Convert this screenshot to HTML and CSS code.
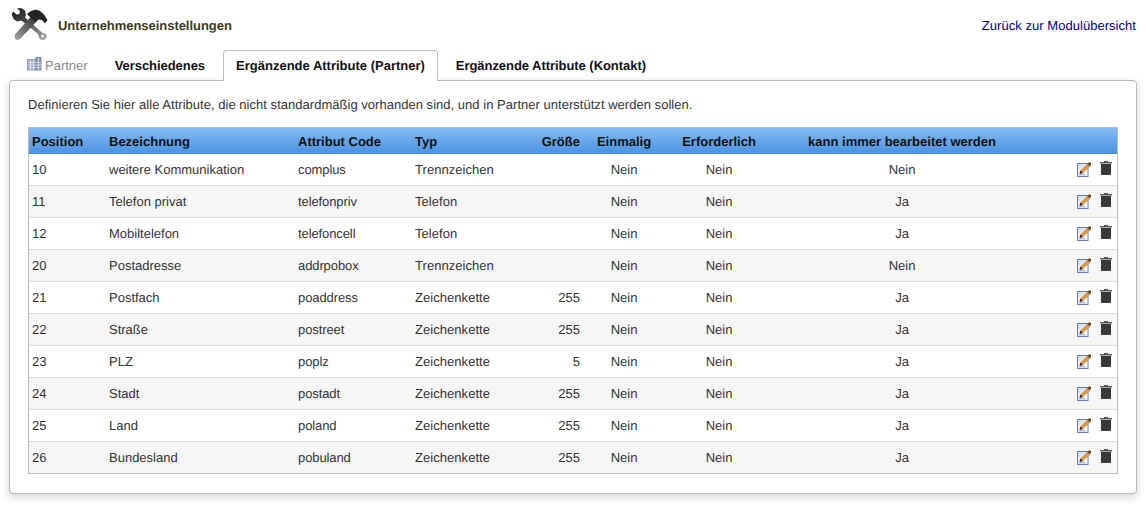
FILE: index.html
```html
<!DOCTYPE html>
<html lang="de">
<head>
<meta charset="utf-8">
<title>Unternehmenseinstellungen</title>
<link rel="stylesheet" href="styles.css">
</head>
<body>
<svg class="defs" width="0" height="0" aria-hidden="true">
  <defs>
    <linearGradient id="metal" x1="0" y1="0" x2="1" y2="1">
      <stop offset="0" stop-color="#1c1c1c"/><stop offset="0.45" stop-color="#4a4a4a"/><stop offset="1" stop-color="#b0b0b0"/>
    </linearGradient>
    <linearGradient id="metal2" x1="1" y1="0" x2="0" y2="1">
      <stop offset="0" stop-color="#333"/><stop offset="0.5" stop-color="#666"/><stop offset="1" stop-color="#a8a8a8"/>
    </linearGradient>
    <linearGradient id="sheet" x1="0" y1="0" x2="1" y2="1">
      <stop offset="0" stop-color="#cfdcf2"/><stop offset="1" stop-color="#ffffff"/>
    </linearGradient>
    <symbol id="edit" viewBox="0 0 14 15">
      <rect x="0.500" y="1.500" width="10.500" height="13" fill="url(#sheet)" stroke="#5f80bd"/>
      <path d="M2.500 12 3.500 8.500 10 2 13 4.500 6 11Z" fill="#e0953f"/>
      <path d="M10 2 11.500 0.500 14 0.500 14 3 13 4.500Z" fill="#6e4c24"/>
      <path d="M2.500 12 3.500 8.500 6 11Z" fill="#2c2c2c"/>
      <path d="M2.500 12.800H8.500" stroke="#8ea4cf" fill="none"/>
    </symbol>
    <symbol id="trash" viewBox="0 0 12 14">
      <path d="M4 0H8V1H12V2.500H0V1H4Z" fill="#555"/>
      <path d="M1 3H11V13Q11 14 10 14H2Q1 14 1 13Z" fill="#383838"/>
    </symbol>
  </defs>
</svg>
<header class="top">
  <div class="brand">
    <svg class="logo" width="37" height="32" viewBox="0 0 37 32">
      <path d="M0.500 6 2.500 3.500 5.500 6.500 8.500 6 9 3 6 0.500 10 0 14 2.500 15 7 14 9.500 31 24.500 35 26 36 29 34 31.500 30.500 32 28 30 27 26 10.500 12.500 6 13.500 2.500 11Z" fill="url(#metal)"/>
      <circle cx="31.500" cy="28" r="1.500" fill="#fff"/>
      <path d="M20 8.500 25.500 13.500 9 31 5.500 32 3.500 30 4 26.500Z" fill="url(#metal2)"/>
      <path d="M16 6 20 3 25 1.500 29 3 33 6.500 36.500 12 34 15.500 31 12 27.500 11.500 25 14 19 9Z" fill="#242424"/>
    </svg>
    <span class="title">Unternehmenseinstellungen</span>
  </div>
  <a class="back" href="#">Zurück zur Modulübersicht</a>
</header>
<nav class="tabs">
  <a class="tab tab-muted" href="#">
    <svg class="tab-icon" width="15" height="14" viewBox="0 0 15 14">
      <rect x="0.500" y="2.500" width="8.500" height="10.500" fill="#a7b0cc" stroke="#8f98b6"/>
      <rect x="9" y="0.500" width="5" height="12.500" fill="#8d97ba" stroke="#7d86a6"/>
      <path d="M1 5.500H14M1 8H14M1 10.500H14M3.500 3V13M6.500 3V13M11.500 1V13" stroke="#dfe3ee" stroke-width="0.800"/>
    </svg>
    Partner
  </a>
  <a class="tab" href="#">Verschiedenes</a>
  <a class="tab tab-active" href="#">Ergänzende Attribute (Partner)</a>
  <a class="tab" href="#">Ergänzende Attribute (Kontakt)</a>
</nav>
<main class="panel">
  <p class="intro">Definieren Sie hier alle Attribute, die nicht standardmäßig vorhanden sind, und in Partner unterstützt werden sollen.</p>
  <table class="grid">
    <colgroup>
      <col class="c-pos"><col class="c-name"><col class="c-code"><col class="c-type"><col class="c-size"><col class="c-uniq"><col class="c-req"><col class="c-edit"><col>
    </colgroup>
    <thead>
      <tr>
        <th>Position</th><th>Bezeichnung</th><th>Attribut Code</th><th>Typ</th><th class="num">Größe</th><th class="mid">Einmalig</th><th class="mid">Erforderlich</th><th class="mid">kann immer bearbeitet werden</th><th></th>
      </tr>
    </thead>
    <tbody>
      <tr><td>10</td><td>weitere Kommunikation</td><td>complus</td><td>Trennzeichen</td><td class="num"></td><td class="mid">Nein</td><td class="mid">Nein</td><td class="mid">Nein</td><td class="acts"><svg class="i-edit"><use href="#edit"/></svg><svg class="i-trash"><use href="#trash"/></svg></td></tr>
      <tr><td>11</td><td>Telefon privat</td><td>telefonpriv</td><td>Telefon</td><td class="num"></td><td class="mid">Nein</td><td class="mid">Nein</td><td class="mid">Ja</td><td class="acts"><svg class="i-edit"><use href="#edit"/></svg><svg class="i-trash"><use href="#trash"/></svg></td></tr>
      <tr><td>12</td><td>Mobiltelefon</td><td>telefoncell</td><td>Telefon</td><td class="num"></td><td class="mid">Nein</td><td class="mid">Nein</td><td class="mid">Ja</td><td class="acts"><svg class="i-edit"><use href="#edit"/></svg><svg class="i-trash"><use href="#trash"/></svg></td></tr>
      <tr><td>20</td><td>Postadresse</td><td>addrpobox</td><td>Trennzeichen</td><td class="num"></td><td class="mid">Nein</td><td class="mid">Nein</td><td class="mid">Nein</td><td class="acts"><svg class="i-edit"><use href="#edit"/></svg><svg class="i-trash"><use href="#trash"/></svg></td></tr>
      <tr><td>21</td><td>Postfach</td><td>poaddress</td><td>Zeichenkette</td><td class="num">255</td><td class="mid">Nein</td><td class="mid">Nein</td><td class="mid">Ja</td><td class="acts"><svg class="i-edit"><use href="#edit"/></svg><svg class="i-trash"><use href="#trash"/></svg></td></tr>
      <tr><td>22</td><td>Straße</td><td>postreet</td><td>Zeichenkette</td><td class="num">255</td><td class="mid">Nein</td><td class="mid">Nein</td><td class="mid">Ja</td><td class="acts"><svg class="i-edit"><use href="#edit"/></svg><svg class="i-trash"><use href="#trash"/></svg></td></tr>
      <tr><td>23</td><td>PLZ</td><td>poplz</td><td>Zeichenkette</td><td class="num">5</td><td class="mid">Nein</td><td class="mid">Nein</td><td class="mid">Ja</td><td class="acts"><svg class="i-edit"><use href="#edit"/></svg><svg class="i-trash"><use href="#trash"/></svg></td></tr>
      <tr><td>24</td><td>Stadt</td><td>postadt</td><td>Zeichenkette</td><td class="num">255</td><td class="mid">Nein</td><td class="mid">Nein</td><td class="mid">Ja</td><td class="acts"><svg class="i-edit"><use href="#edit"/></svg><svg class="i-trash"><use href="#trash"/></svg></td></tr>
      <tr><td>25</td><td>Land</td><td>poland</td><td>Zeichenkette</td><td class="num">255</td><td class="mid">Nein</td><td class="mid">Nein</td><td class="mid">Ja</td><td class="acts"><svg class="i-edit"><use href="#edit"/></svg><svg class="i-trash"><use href="#trash"/></svg></td></tr>
      <tr><td>26</td><td>Bundesland</td><td>pobuland</td><td>Zeichenkette</td><td class="num">255</td><td class="mid">Nein</td><td class="mid">Nein</td><td class="mid">Ja</td><td class="acts"><svg class="i-edit"><use href="#edit"/></svg><svg class="i-trash"><use href="#trash"/></svg></td></tr>
    </tbody>
  </table>
</main>
</body>
</html>
```
FILE: styles.css
```css
* { box-sizing: border-box; }
html, body { margin: 0; padding: 0; }
body {
  width: 1146px;
  height: 516px;
  overflow: hidden;
  background: #fff;
  font-family: "Liberation Sans", Arial, sans-serif;
  font-size: 13px;
  color: #333;
  text-rendering: geometricPrecision;
}
.defs { display: block; height: 0; }
.top {
  display: flex;
  justify-content: space-between;
  align-items: center;
  height: 50px;
  padding: 0 10px 0 11px;
}
.brand { display: flex; align-items: center; gap: 10px; }
.logo { display: block; margin-top: -2px; }
.title { font-weight: 700; color: #3c3a1e; letter-spacing: -0.04px; }
.back { color: #00007f; text-decoration: none; letter-spacing: 0.04px; }
.tabs {
  display: flex;
  height: 31px;
  padding-left: 15px;
  position: relative;
  z-index: 1;
}
.tab {
  display: flex;
  align-items: center;
  height: 31px;
  padding: 0 12px 1px;
  border: 1px solid transparent;
  border-bottom: 0;
  border-radius: 4px 4px 0 0;
  color: #111;
  font-weight: 700;
  text-decoration: none;
  white-space: nowrap;
  margin-right: 5px;
  letter-spacing: -0.05px;
}
.tab-muted {
  color: #8a8a8a;
  font-weight: 400;
  padding-left: 11px;
  margin-right: 1px;
  letter-spacing: 0;
}
.tab-icon { margin-right: 3px; margin-top: -4px; }
.tab-active {
  background: #fff;
  border-color: #bbb;
  letter-spacing: 0;
}
.panel {
  width: 1128px;
  height: 414px;
  margin: -1px 0 0 9px;
  padding: 0 18px;
  border: 1px solid #b9b9b9;
  border-radius: 4px;
  background: #fff;
  box-shadow: 0 3px 8px rgba(0, 0, 0, 0.18);
}
.intro { margin: 16px 0 0; line-height: 15px; color: #333; letter-spacing: 0.027px; }
.grid {
  width: 1090px;
  margin-top: 15px;
  table-layout: fixed;
  border-collapse: separate;
  border-spacing: 0;
  border: 1px solid #bbb;
}
.c-pos { width: 77px; }
.c-name { width: 189px; }
.c-code { width: 117px; }
.c-type { width: 115px; }
.c-size { width: 56px; }
.c-uniq { width: 82px; }
.c-req { width: 108px; }
.c-edit { width: 258px; }
.grid th {
  height: 26px;
  padding: 0 3px;
  text-align: left;
  font-weight: 700;
  color: #111;
  background: linear-gradient(#85bcf7, #4a92e0);
  white-space: nowrap;
}
.grid td {
  height: 32px;
  padding: 0 3px;
  border-bottom: 1px solid #dcdcdc;
  color: #333;
  white-space: nowrap;
}
.grid td:nth-child(3) { letter-spacing: -0.1px; }
.grid td:nth-child(4) { letter-spacing: 0.05px; }
.grid tbody tr:last-child td { border-bottom: 0; height: 31px; }
.grid tbody tr:nth-child(even) td { background: #f6f6f6; }
.grid .num { text-align: right; }
.grid .mid { text-align: center; }
.grid .acts { text-align: right; padding-right: 5px; }
.i-edit { width: 14px; height: 15px; vertical-align: middle; margin-right: 9px; position: relative; top: -1px; }
.i-trash { width: 12px; height: 14px; vertical-align: middle; position: relative; top: -2px; }
```
